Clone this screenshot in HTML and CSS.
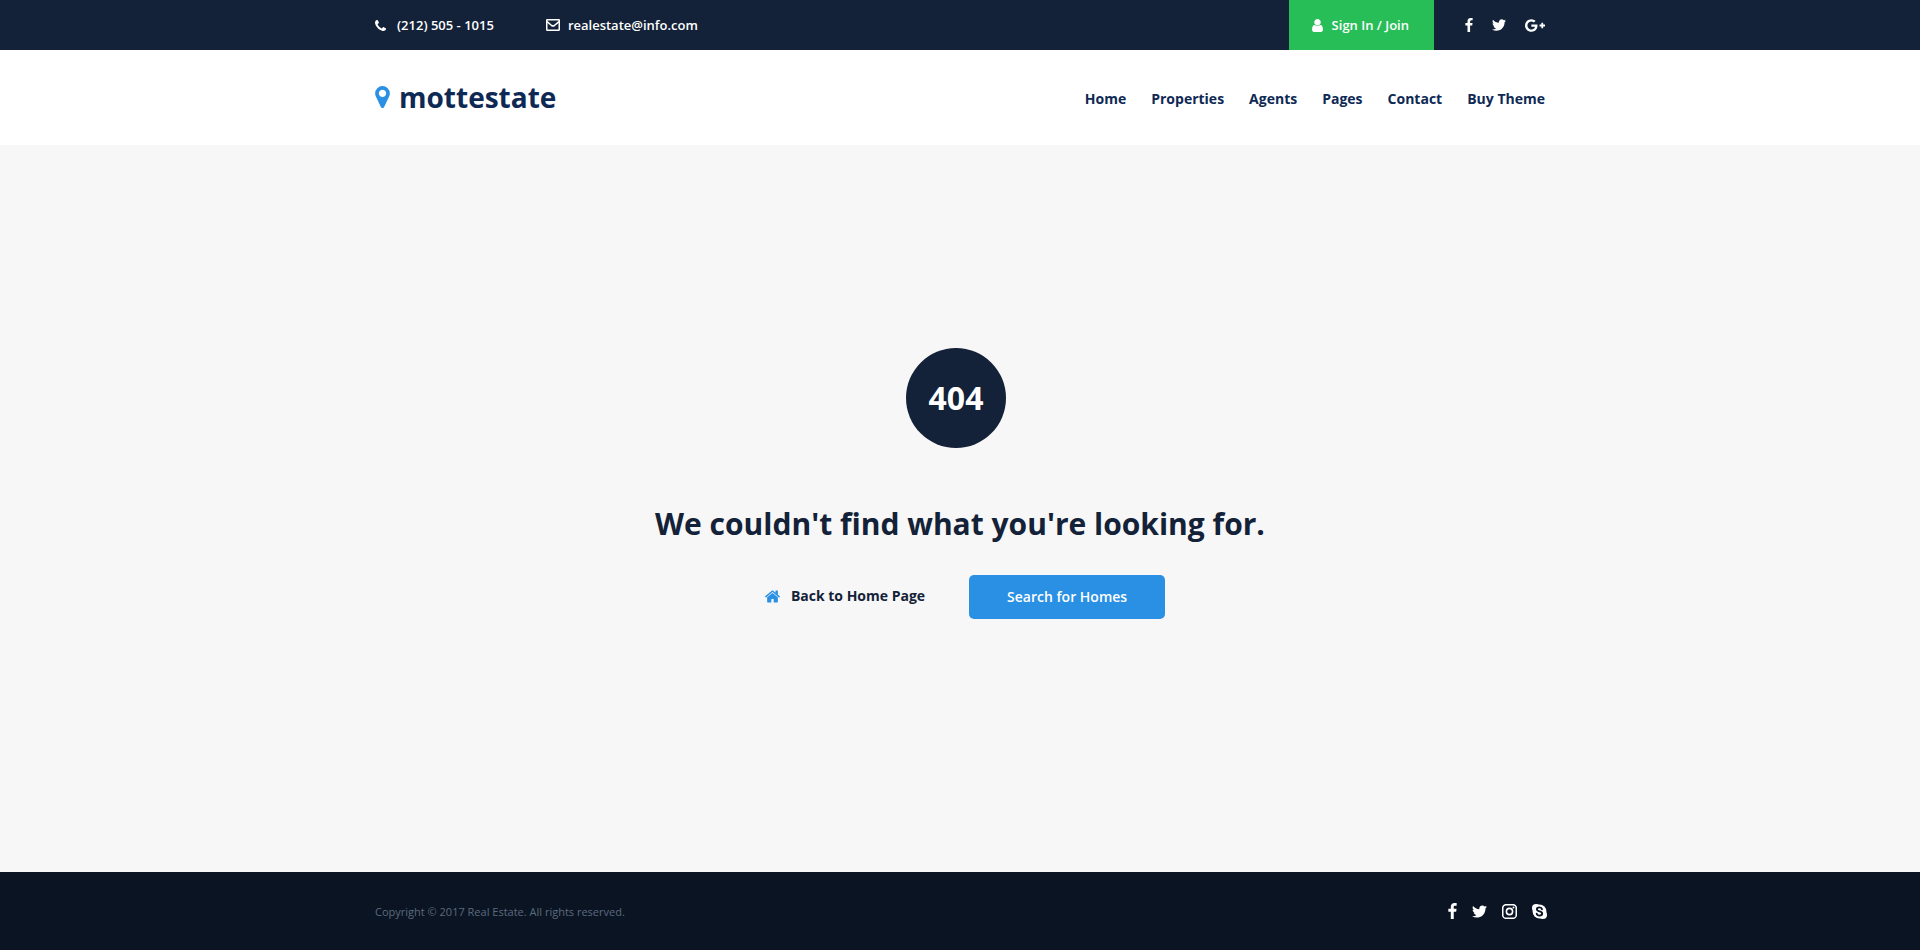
FILE: index.html
```html
<!DOCTYPE html>
<html lang="en">
<head>
<meta charset="utf-8">
<meta name="viewport" content="width=device-width, initial-scale=1">
<title>Mottestate - 404</title>
<link rel="stylesheet" href="styles.css">
</head>
<body>
<svg class="sprite" aria-hidden="true">
  <symbol id="facebook" viewBox="479 0 864 1664"><path d="M1343 12v264h-157q-86 0-116 36t-30 108v189h293l-39 296h-254v759h-306v-759h-255v-296h255v-218q0-186 104-288.500t277-102.500q147 0 228 12z"/></symbol>
  <symbol id="twitter" viewBox="108 256 1576 1280"><path d="M1684 408q-67 98-162 167 1 14 1 42 0 130-38 259.500t-115.500 248.500-184.500 210.500-258 146-323 54.500q-271 0-496-145 35 4 78 4 225 0 401-138-105-2-188-64.500t-114-159.500q33 5 61 5 43 0 85-11-112-23-185.500-111.500t-73.500-205.500v-4q68 38 146 41-66-44-105-115t-39-154q0-88 44-163 121 149 294.500 238.500t371.500 99.500q-8-38-8-74 0-134 94.500-228.500t228.500-94.500q140 0 236 102 109-21 205-78-37 115-142 178 93-10 186-50z"/></symbol>
</svg>

<div class="topbar">
  <div class="container topbar-inner">
    <div class="contacts">
      <a class="contact" href="tel:2125051015">
        <svg class="icon-phone" viewBox="192 128 1408 1408" aria-hidden="true"><path d="M1600 1240q0 27-10 70.500t-21 68.500q-21 50-122 106-94 51-186 51-27 0-53-3.500t-57.500-12.500-47-14.500-55.500-20.500-49-18q-98-35-175-83-127-79-264-216t-216-264q-48-77-83-175-3-9-18-49t-20.500-55.500-14.500-47-12.500-57.500-3.500-53q0-92 51-186 56-101 106-122 25-11 68.500-21t70.500-10q14 0 21 3 18 6 53 76 11 19 30 54t35 63.500 31 53.500q3 4 17.500 25t21.500 35.500 7 28.500q0 20-28.500 50t-62 55-62 53-28.500 46q0 9 5 22.500t8.500 20.500 14 24 11.500 19q76 137 174 235t235 174q2 1 19 11.500t24 14 20.500 8.500 22.500 5q18 0 46-28.500t53-62 55-62 50-28.500q14 0 28.500 7t35.500 21.500 25 17.500q25 15 53.500 31t63.500 35 54 30q70 35 76 53 3 7 3 21z"/></svg>
        <span>(212) 505 - 1015</span>
      </a>
      <a class="contact" href="mailto:realestate@info.com">
        <svg class="icon-mail" viewBox="0 0 14 12" aria-hidden="true"><rect x=".7" y=".7" width="12.600" height="10.600" rx="1"/><path d="M1 2.600l4.600 3.900c.9.700 1.900.7 2.800 0L13 2.600"/></svg>
        <span>realestate@info.com</span>
      </a>
    </div>
    <div class="account">
      <a class="signin" href="#signin">
        <svg class="icon-user" viewBox="256 128 1280 1536" aria-hidden="true"><path d="M1536 1399q0 109-62.500 187t-150.500 78h-854q-88 0-150.500-78t-62.500-187q0-85 8.500-160.500t31.500-152 58.500-131 94-89 134.500-34.500q131 128 313 128t313-128q76 0 134.500 34.500t94 89 58.500 131 31.500 152 8.500 160.500zm-256-887q0 159-112.500 271.500t-271.500 112.500-271.500-112.500-112.500-271.500 112.500-271.500 271.500-112.500 271.500 112.500 112.500 271.500z"/></svg>
        <span>Sign In / Join</span>
      </a>
      <div class="social">
        <a href="#facebook" aria-label="Facebook"><svg class="icon-fb"><use href="#facebook"/></svg></a>
        <a href="#twitter" aria-label="Twitter"><svg class="icon-tw"><use href="#twitter"/></svg></a>
        <a href="#google" aria-label="Google Plus"><svg class="icon-gp" viewBox="0 163 2304 1466"><path d="M1437 913q0 208-87 370.500t-248 254-369 91.500q-149 0-285-58t-234-156-156-234-58-285 58-285 156-234 234-156 285-58q286 0 491 192l-199 191q-117-113-292-113-123 0-227.500 62t-165.500 168.500-61 232.500 61 232.500 165.500 168.500 227.500 62q83 0 152.500-23t114.500-57.500 78.500-78.500 49-83 21.500-74h-416v-252h692q12 63 12 122zm867-122v210h-209v209h-210v-209h-209v-210h209v-209h210v209h209z"/></svg></a>
      </div>
    </div>
  </div>
</div>

<header class="header">
  <div class="container header-inner">
    <a class="logo" href="#home">
      <svg class="icon-pin" viewBox="384 128 1024 1536" aria-hidden="true"><path d="M1152 640q0-106-75-181t-181-75-181 75-75 181 75 181 181 75 181-75 75-181zm256 0q0 109-33 179l-364 774q-16 33-47.500 52t-67.500 19-67.500-19-46.500-52l-365-774q-33-70-33-179 0-212 150-362t362-150 362 150 150 362z"/></svg>
      <span>mottestate</span>
    </a>
    <nav class="nav">
      <a href="#home">Home</a>
      <a href="#properties">Properties</a>
      <a href="#agents">Agents</a>
      <a href="#pages">Pages</a>
      <a href="#contact">Contact</a>
      <a href="#buy">Buy Theme</a>
    </nav>
  </div>
</header>

<main class="error">
  <div class="code">404</div>
  <h1 class="title">We couldn't find what you're looking for.</h1>
  <div class="actions">
    <a class="back" href="#home">
      <svg class="icon-home" viewBox="89 256 1614 1280" aria-hidden="true"><path d="M1472 992v480q0 26-19 45t-45 19h-384v-384h-256v384h-384q-26 0-45-19t-19-45v-480q0-1 .5-3t.5-3l575-474 575 474q1 2 1 6zm223-69l-62 74q-8 9-21 11h-3q-13 0-21-7l-692-577-692 577q-12 8-24 7-13-2-21-11l-62-74q-8-10-7-23.500t11-21.500l719-599q32-26 76-26t76 26l244 204v-195q0-14 9-23t23-9h192q14 0 23 9t9 23v408l219 182q10 8 11 21.500t-7 23.500z"/></svg>
      <span>Back to Home Page</span>
    </a>
    <a class="search" href="#search">Search for Homes</a>
  </div>
</main>

<footer class="footer">
  <div class="container footer-inner">
    <p class="copyright">Copyright © 2017 Real Estate. All rights reserved.</p>
    <div class="footer-social">
      <a href="#facebook" aria-label="Facebook"><svg class="icon-fb-lg"><use href="#facebook"/></svg></a>
      <a href="#twitter" aria-label="Twitter"><svg class="icon-tw-lg"><use href="#twitter"/></svg></a>
      <a href="#instagram" aria-label="Instagram"><svg class="icon-square" viewBox="0 0 15 15"><rect class="line" x=".7" y=".7" width="13.600" height="13.600" rx="3.400"/><circle class="line" cx="7.500" cy="7.500" r="3.100"/><circle cx="11.500" cy="3.500" r=".95"/></svg></a>
      <a href="#skype" aria-label="Skype"><svg class="icon-square" viewBox="0 0 15 15"><circle cx="7.500" cy="7.500" r="6.900"/><circle cx="4.100" cy="4.100" r="4.100"/><circle cx="10.900" cy="10.900" r="4.100"/><path class="cut" d="M10 5.200C9.700 3.900 8.800 3.400 7.500 3.400 6 3.400 4.900 4.100 4.900 5.300c0 2.800 5.300 1.500 5.300 4.200 0 1.300-1.200 2.100-2.700 2.100-1.500 0-2.500-.7-2.800-2"/></svg></a>
    </div>
  </div>
</footer>
</body>
</html>
```
FILE: styles.css
```css
* { box-sizing: border-box; }

body {
  margin: 0;
  min-height: 100vh;
  display: flex;
  flex-direction: column;
  background: #f7f7f7;
  color: #132238;
  font-family: "Open Sans", "Liberation Sans", sans-serif;
  font-size: 14px;
}

a { color: inherit; text-decoration: none; }
svg { display: block; flex: none; fill: currentColor; }
.sprite { position: absolute; width: 0; height: 0; }

.container {
  width: 100%;
  max-width: 1200px;
  margin: 0 auto;
  padding: 0 15px;
}

.topbar { background: #132238; color: #fff; font-size: 13px; font-weight: 600; }
.topbar-inner { display: flex; justify-content: space-between; }
.contacts { display: flex; align-items: center; gap: 52px; }
.contact { display: flex; align-items: center; gap: 11px; }
.contact + .contact { gap: 8px; }
.account { display: flex; align-items: center; gap: 31px; }
.signin {
  display: flex;
  align-items: center;
  gap: 9px;
  padding: 0 25px 0 23px;
  line-height: 50px;
  background: #27be58;
}
.social { display: flex; align-items: center; gap: 19px; }
.icon-phone { width: 11px; height: 11px; }
.icon-mail { width: 14px; height: 12px; fill: none; stroke: currentColor; stroke-width: 1.6; }
.icon-user { width: 11px; height: 13px; }
.icon-fb { width: 8px; height: 14px; }
.icon-tw { width: 14px; height: 12px; }
.icon-gp { width: 20px; height: 13px; }

.header { background: #fff; }
.header-inner { display: flex; align-items: center; justify-content: space-between; min-height: 95px; }
.logo {
  display: flex;
  align-items: center;
  gap: 9px;
  padding-bottom: 2px;
  color: #0e2954;
  font-size: 28px;
  font-weight: 700;
  line-height: 40px;
}
.icon-pin { width: 15px; height: 22px; fill: #2990e4; }
.nav { display: flex; gap: 25px; padding-top: 2px; color: #0e2954; font-weight: 700; }

.error {
  flex: 1;
  display: flex;
  flex-direction: column;
  align-items: center;
  justify-content: center;
  padding: 0 15px 50px;
}
.code {
  width: 100px;
  margin-right: 8px;
  border-radius: 50%;
  background: #132238;
  color: #fff;
  font-size: 32px;
  font-weight: 700;
  line-height: 100px;
  text-align: center;
}
.title { margin: 56px 0 31px; font-size: 30px; font-weight: 700; line-height: 40px; text-align: center; }
.actions { display: flex; align-items: flex-start; gap: 44px; }
.back { display: flex; align-items: center; gap: 11px; padding-left: 10px; font-weight: 700; line-height: 42px; }
.icon-home { width: 15px; height: 13px; fill: #2990e4; }
.search {
  padding: 0 38px;
  border-radius: 5px;
  background: #2990e4;
  color: #fff;
  font-weight: 600;
  line-height: 44px;
}

.footer { background: #0a1422; }
.footer-inner { display: flex; align-items: center; justify-content: space-between; min-height: 78px; }
.copyright { margin: 0; color: #5d6a7e; font-size: 11px; }
.footer-social { display: flex; align-items: center; gap: 15px; margin-right: -2px; color: #fff; }
.icon-fb-lg { width: 9px; height: 16px; }
.icon-tw-lg { width: 15px; height: 13px; }
.icon-square { width: 15px; height: 15px; }
.line { fill: none; stroke: currentColor; stroke-width: 1.6; }
.cut { fill: none; stroke: #0a1422; stroke-width: 1.9; stroke-linecap: round; }
```
